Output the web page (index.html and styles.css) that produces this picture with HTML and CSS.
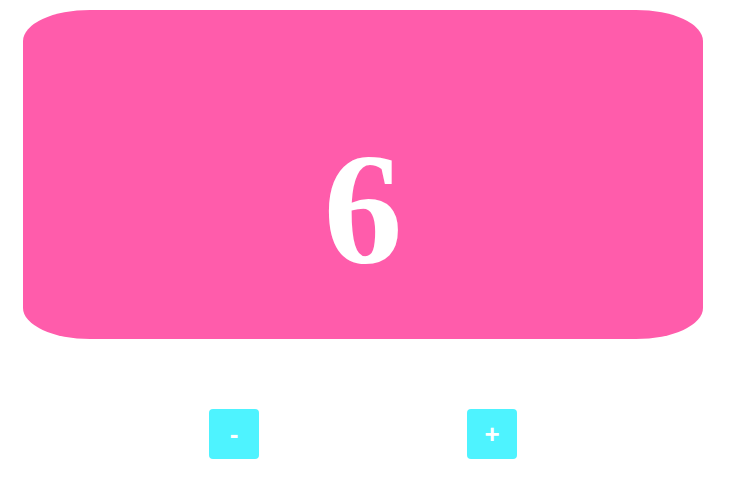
FILE: index.html
```html
<!DOCTYPE html>
<html>
<head>
<meta charset="utf-8">
<link rel="stylesheet" href="styles.css">
</head>
<body>
<div class="app">
  <div class="display"><span class="count">6</span></div>
  <div class="controls">
    <button class="btn">-</button>
    <button class="btn">+</button>
  </div>
</div>
</body>
</html>
```
FILE: styles.css
```css
html, body {
  margin: 0;
  padding: 0;
  background: #ffffff;
}
.app {
  width: 680px;
  padding: 10px 0 0 23px;
  display: flex;
  flex-direction: column;
  align-items: center;
}
.display {
  width: 680px;
  height: 329px;
  background: #ff5cab;
  border-radius: 67px / 31px;
  display: flex;
  align-items: center;
  justify-content: center;
  box-sizing: border-box;
  padding-top: 68px;
}
.count {
  font-family: "Liberation Serif", "Times New Roman", serif;
  font-weight: bold;
  font-size: 158px;
  line-height: 1;
  color: #ffffff;
}
.controls {
  margin-top: 70px;
  display: flex;
  gap: 208px;
}
.btn {
  width: 50px;
  height: 50px;
  border: none;
  border-radius: 4px;
  background: #4ef3ff;
  color: #ffffff;
  font-family: "Liberation Sans", Arial, sans-serif;
  font-weight: bold;
  font-size: 26px;
  padding: 0;
  display: flex;
  align-items: center;
  justify-content: center;
}
```
